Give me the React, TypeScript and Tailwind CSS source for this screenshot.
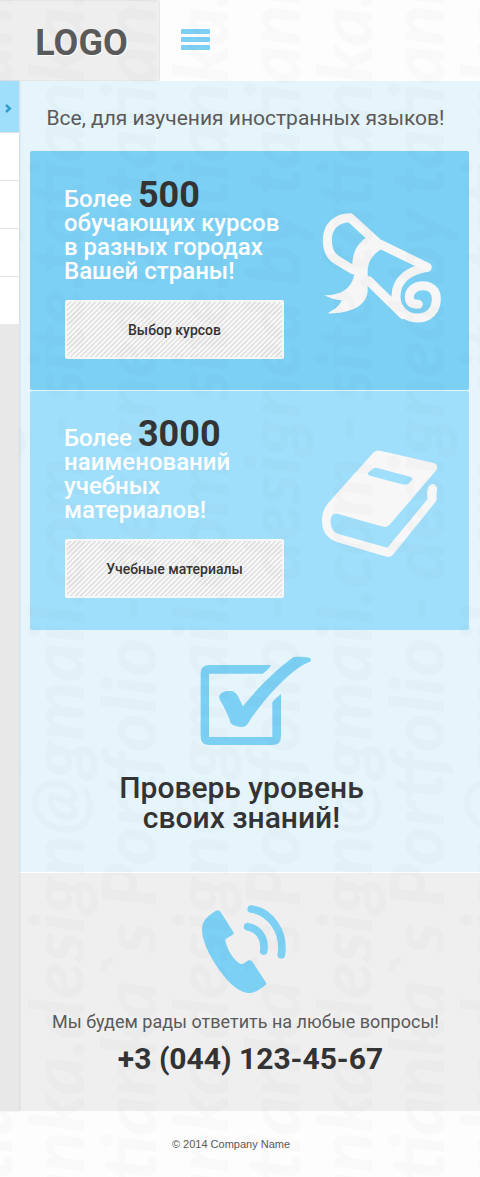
import React from "react";

const stripes =
  "bg-[linear-gradient(135deg,transparent_25%,#e1e1e1_25%,#e1e1e1_50%,transparent_50%,transparent_75%,#e1e1e1_75%)] bg-[length:5px_5px]";

function DiplomaIcon() {
  return (
    <svg viewBox="66 63 360 336" className="h-[112px] w-[120px] shrink-0" aria-hidden="true">
      <g fill="none" stroke="#f6f6f6" strokeWidth="27" strokeLinecap="round" strokeLinejoin="round">
        <path d="M160 240 L112 211 C92 200 82 178 82 150 C82 110 110 83 150 83 L232 158 L382 232 C330 240 288 268 288 318 C288 360 320 384 352 384 C388 384 409 360 409 326 C409 302 393 287 369 287 C345 287 328 302 328 322 C328 337 338 343 355 343" />
        <path d="M206 272 L310 374" />
      </g>
      <path
        fill="#f6f6f6"
        d="M196 145 C172 162 156 190 157 228 L163 252 C157 290 130 316 72 316 C88 324 108 330 125 331 C118 348 102 360 82 370 C140 372 203 352 203 300 L203 245 C203 215 220 190 245 178 L243 150Z"
      />
      <path fill="#f6f6f6" d="M258 318 L274 328 L278 300 L300 350 L300 370Z" />
    </svg>
  );
}

function BookIcon() {
  return (
    <svg viewBox="66 63 360 336" className="h-[112px] w-[120px] shrink-0" aria-hidden="true">
      <path
        fill="#f7f7f7"
        fillRule="evenodd"
        d="M221 70 Q229 62 240 65 L402 102 Q415 107 410 122 L270 286 Q262 296 250 293 L112 254 C98 252 92 262 92 276 C92 300 102 311 118 316 L262 356 L383 210 C381 196 380 186 385 174 Q390 164 400 165 Q411 169 411 180 L409 202 Q413 210 408 217 L280 376 Q272 386 260 383 L108 338 C80 326 66 306 66 275 C66 248 76 231 92 214Z M219 119 Q224 115 232 117 L330 143 Q340 147 335 154 L325 164 Q320 168 312 167 L210 140 Q200 136 206 130Z"
      />
    </svg>
  );
}

function CheckIcon() {
  return (
    <svg viewBox="60 48 333 270" className="h-[90px] w-[111px]" fill="#7bd0f4" aria-hidden="true">
      <path d="M273 75 L88 75 Q62 75 62 101 V290 Q62 315 88 315 H277 Q303 315 303 290 V162 Q286 174 277 187 V291 H87 V101 H248 Q262 93 273 75Z" />
      <path d="M118 168 C122 155 142 150 158 154 C176 162 180 185 189 199 C220 160 270 105 335 55 C345 48 365 51 388 53 Q396 57 390 65 C350 78 280 140 210 240 C204 252 198 261 186 261 C175 261 160 258 152 250 C145 225 135 205 120 180 Q116 174 118 168Z" />
    </svg>
  );
}

function PhoneIcon() {
  return (
    <svg viewBox="66 47 252 267" className="h-[89px] w-[84px]" aria-hidden="true">
      <path
        fill="#7bd0f4"
        d="M108 64 Q116 60 122 68 L160 128 Q163 135 156 138 L140 147 Q134 152 137 160 C145 185 160 210 180 223 Q186 226 192 222 L206 213 Q213 211 217 217 L257 278 Q261 285 254 289 C240 300 222 312 205 311 C180 310 150 285 130 258 C100 220 68 165 66 125 C65 95 80 82 108 64Z"
      />
      <g fill="none" stroke="#7bd0f4" strokeWidth="23" strokeLinecap="round">
        <path d="M203 112 C235 118 257 145 251 185" />
        <path d="M214 59 C270 68 315 125 304 196" />
      </g>
    </svg>
  );
}

type CardProps = {
  tone: string;
  count: string;
  lines: string[];
  action: string;
  icon: React.ReactNode;
};

function Card({ tone, count, lines, action, icon }: CardProps) {
  return (
    <section className={`flex items-start justify-between rounded-xs pl-[34px] pr-[27px] ${tone}`}>
      <div>
        <h2 className="text-2xl/6 font-medium text-white">
          Более <strong className="text-4xl/[0px] font-bold text-[#333]">{count}</strong>
          {lines.map((line) => (
            <span key={line} className="block">
              {line}
            </span>
          ))}
        </h2>
        <button
          type="button"
          className={`ml-px mt-[17px] h-[59px] w-[219px] rounded-xs border-2 border-[#f7f7f7] bg-[#f7f7f7] text-sm font-medium text-[#333] ${stripes}`}
        >
          {action}
        </button>
      </div>
      <div className="pt-6">{icon}</div>
    </section>
  );
}

const columnClass =
  "h-full w-[72px] shrink-0 rotate-180 whitespace-nowrap [writing-mode:vertical-rl]";

function BackgroundLettering() {
  const mail = "tatianka.design@gmail.com - site.tatianka.tk";
  const portfolio = "tatianka`s Portfolio - designed by tatianka";
  return (
    <div
      aria-hidden="true"
      className="pointer-events-none absolute inset-0 flex select-none overflow-hidden font-['Lato',sans-serif] text-[74px]/[72px] font-black italic text-[#777]/[0.028]"
    >
      <div className="-ml-[52px] flex h-full">
        {[0, 1, 2, 3].map((n) => (
          <React.Fragment key={n}>
            <p className={`${columnClass} indent-[-68px]`}>{portfolio}</p>
            <p className={`${columnClass} indent-[-144px]`}>{mail}</p>
          </React.Fragment>
        ))}
      </div>
    </div>
  );
}

export default function App() {
  return (
    <div className="relative flex min-h-screen flex-col overflow-hidden bg-[#fdfdfd] font-['Roboto',sans-serif] text-[#5a5a5a]">
      <header className="flex h-[81px] items-stretch">
        <a
          href="#"
          className="flex w-40 items-center justify-center rounded-r-xs border border-l-0 border-[#e6e6e6] bg-[#eee] pl-1 pt-1 text-4xl font-bold [text-shadow:1px_1px_0_#fff]"
        >
          LOGO
        </a>
        <button type="button" aria-label="Меню" className="ml-[21px] flex w-[29px] flex-col justify-center gap-[3px] pb-0.5">
          <span className="h-[5px] w-full rounded-[1px] bg-[#7bd0f4]" />
          <span className="h-[5px] w-full rounded-[1px] bg-[#7bd0f4]" />
          <span className="h-[5px] w-full rounded-[1px] bg-[#7bd0f4]" />
        </button>
      </header>

      <div className="flex grow">
        <nav aria-label="Разделы" className="z-10 w-[19px] shrink-0 bg-[#e8e8e8] shadow-[1px_0_2px_rgba(0,0,0,0.1)]">
          <a href="#" aria-label="Раздел 1" className="flex h-[51px] items-center justify-end bg-[#a0dffb] pr-[7px] pt-[3px]">
            <svg viewBox="0 0 7 9" className="h-[9px] w-[7px]" fill="none" stroke="#2f9fce" strokeWidth="2.4" aria-hidden="true">
              <path d="M1 1 L4.8 4.5 L1 8" />
            </svg>
          </a>
          {[2, 3, 4, 5].map((n) => (
            <a key={n} href="#" aria-label={`Раздел ${n}`} className="block h-12 border-t border-[#e2e2e2] bg-white" />
          ))}
        </nav>

        <main className="min-w-0 grow">
          <div className="bg-[#e6f4fb] px-[11px] pb-[39px]">
            <h1 className="pb-5 pr-2 pt-[25px] text-center text-[21px]/[25px]">
              Все, для изучения иностранных языков!
            </h1>
            <div className="flex flex-col gap-px">
              <Card
                tone="bg-[#7bd0f4] pt-9 pb-[31px]"
                count="500"
                lines={["обучающих курсов", "в разных городах", "Вашей страны!"]}
                action="Выбор курсов"
                icon={<DiplomaIcon />}
              />
              <Card
                tone="bg-[#a0dffb] pt-[35px] pb-8"
                count="3000"
                lines={["наименований", "учебных", "материалов!"]}
                action="Учебные материалы"
                icon={<BookIcon />}
              />
            </div>
            <section className="flex flex-col items-center pt-[26px]">
              <div className="pl-3">
                <CheckIcon />
              </div>
              <h2 className="pr-4 pt-[27px] text-center text-[30px]/[30px] font-medium text-[#333]">
                Проверь уровень
                <br />
                своих знаний!
              </h2>
            </section>
          </div>

          <section className="flex flex-col items-center border-t border-white bg-[#efefef] px-[11px] pb-[34px] pt-8">
            <div className="pr-3">
              <PhoneIcon />
            </div>
            <p className="pr-2 pt-4 text-lg/6">Мы будем рады ответить на любые вопросы!</p>
            <a href="tel:+30441234567" className="pl-0.5 pt-[7px] text-[30px]/9 font-bold text-[#333]">
              +3 (044) 123-45-67
            </a>
          </section>
        </main>
      </div>

      <footer className="flex h-[67px] items-center justify-center pr-[18px] font-['Liberation_Sans',sans-serif] text-[11px]">
        © 2014 Company Name
      </footer>

      <BackgroundLettering />
    </div>
  );
}
